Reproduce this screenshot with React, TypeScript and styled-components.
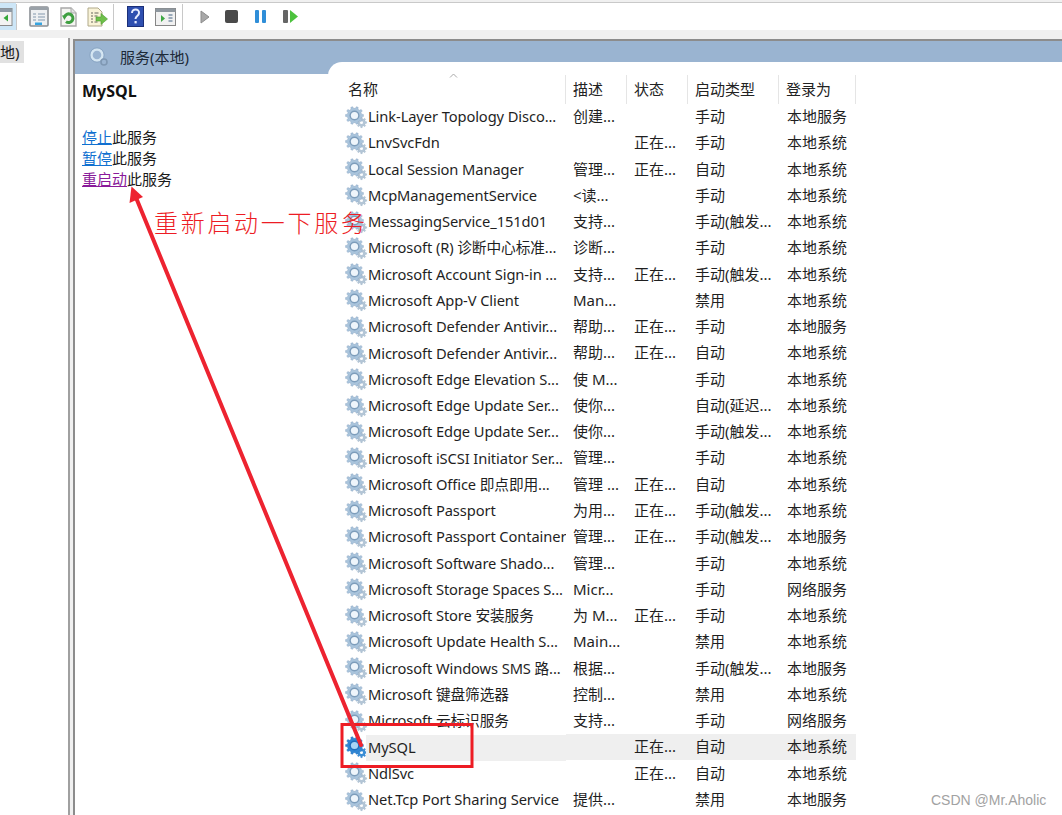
import React from 'react'
import styled, { createGlobalStyle } from 'styled-components'

type Service = {
  name: string;
  desc: string;
  status: string;
  start: string;
  logon: string;
}

const services: Service[] = [
  { name: 'Link-Layer Topology Disco...', desc: '创建...', status: '', start: '手动', logon: '本地服务' },
  { name: 'LnvSvcFdn', desc: '', status: '正在...', start: '手动', logon: '本地系统' },
  { name: 'Local Session Manager', desc: '管理...', status: '正在...', start: '自动', logon: '本地系统' },
  { name: 'McpManagementService', desc: '<读...', status: '', start: '手动', logon: '本地系统' },
  { name: 'MessagingService_151d01', desc: '支持...', status: '', start: '手动(触发...', logon: '本地系统' },
  { name: 'Microsoft (R) 诊断中心标准...', desc: '诊断...', status: '', start: '手动', logon: '本地系统' },
  { name: 'Microsoft Account Sign-in ...', desc: '支持...', status: '正在...', start: '手动(触发...', logon: '本地系统' },
  { name: 'Microsoft App-V Client', desc: 'Man...', status: '', start: '禁用', logon: '本地系统' },
  { name: 'Microsoft Defender Antivir...', desc: '帮助...', status: '正在...', start: '手动', logon: '本地服务' },
  { name: 'Microsoft Defender Antivir...', desc: '帮助...', status: '正在...', start: '自动', logon: '本地系统' },
  { name: 'Microsoft Edge Elevation S...', desc: '使 M...', status: '', start: '手动', logon: '本地系统' },
  { name: 'Microsoft Edge Update Ser...', desc: '使你...', status: '', start: '自动(延迟...', logon: '本地系统' },
  { name: 'Microsoft Edge Update Ser...', desc: '使你...', status: '', start: '手动(触发...', logon: '本地系统' },
  { name: 'Microsoft iSCSI Initiator Ser...', desc: '管理...', status: '', start: '手动', logon: '本地系统' },
  { name: 'Microsoft Office 即点即用...', desc: '管理 ...', status: '正在...', start: '自动', logon: '本地系统' },
  { name: 'Microsoft Passport', desc: '为用...', status: '正在...', start: '手动(触发...', logon: '本地系统' },
  { name: 'Microsoft Passport Container', desc: '管理...', status: '正在...', start: '手动(触发...', logon: '本地服务' },
  { name: 'Microsoft Software Shado...', desc: '管理...', status: '', start: '手动', logon: '本地系统' },
  { name: 'Microsoft Storage Spaces S...', desc: 'Micr...', status: '', start: '手动', logon: '网络服务' },
  { name: 'Microsoft Store 安装服务', desc: '为 M...', status: '正在...', start: '手动', logon: '本地系统' },
  { name: 'Microsoft Update Health S...', desc: 'Main...', status: '', start: '禁用', logon: '本地系统' },
  { name: 'Microsoft Windows SMS 路...', desc: '根据...', status: '', start: '手动(触发...', logon: '本地服务' },
  { name: 'Microsoft 键盘筛选器', desc: '控制...', status: '', start: '禁用', logon: '本地系统' },
  { name: 'Microsoft 云标识服务', desc: '支持...', status: '', start: '手动', logon: '网络服务' },
  { name: 'MySQL', desc: '', status: '正在...', start: '自动', logon: '本地系统' },
  { name: 'NdlSvc', desc: '', status: '正在...', start: '自动', logon: '本地系统' },
  { name: 'Net.Tcp Port Sharing Service', desc: '提供...', status: '', start: '禁用', logon: '本地服务' },
]

const GlobalStyle = createGlobalStyle`
  html, body {
    margin: 0;
    padding: 0;
    background: #fff;
  }
  body {
    font-family: "Noto Sans", "Noto Sans CJK SC", sans-serif;
    font-size: 15px;
    color: #1a1a1a;
  }
`

const Page = styled.div`
  position: relative;
  width: 1062px;
  height: 815px;
  overflow: hidden;
  background: #f0f0f0;
  display: flex;
  flex-direction: column;
`

const Toolbar = styled.div`
  height: 27px;
  margin-top: 2px;
  border-top: 1px solid #c9c9c9;
  background: #fff;
  display: flex;
  align-items: center;
  flex-shrink: 0;
`

const ToolButton = styled.div<{ $w: number; $active?: boolean }>`
  width: ${p => p.$w}px;
  height: 100%;
  display: flex;
  align-items: center;
  justify-content: center;
  background: ${p => (p.$active ? '#cde6f7' : 'transparent')};
  overflow: hidden;
`

const ToolSep = styled.div`
  width: 1px;
  height: 26px;
  background: #c8c8c8;
`

const Workspace = styled.div`
  flex: 1;
  display: flex;
  margin-top: 8px;
  gap: 3px;
  min-height: 0;
`

const TreePane = styled.div`
  width: 68px;
  background: #fff;
  border-right: 2px solid #a0a0a0;
  padding-top: 3px;
  flex-shrink: 0;
`

const TreeItem = styled.div`
  width: 24px;
  height: 22px;
  line-height: 22px;
  background: #e1e1e1;
  font-size: 15px;
  white-space: nowrap;
`

const ServicePanel = styled.div`
  flex: 1;
  border-left: 2px solid #8c8c8c;
  border-top: 2px solid #8c8c8c;
  margin-top: 1px;
  background: #fff;
  display: flex;
  flex-direction: column;
  min-width: 0;
`

const PanelHeader = styled.div`
  height: 33px;
  box-sizing: border-box;
  padding: 0 0 2px 14px;
  background: #9ab4d1;
  display: flex;
  align-items: center;
  gap: 11px;
  font-size: 15px;
  color: #1d2a38;
  flex-shrink: 0;
`

const PanelBody = styled.div`
  flex: 1;
  display: flex;
  min-height: 0;
`

const DetailPane = styled.div`
  width: 253px;
  padding: 5px 0 0 7px;
  box-sizing: border-box;
  flex-shrink: 0;
`

const DetailTitle = styled.div`
  font-weight: 700;
  font-size: 16px;
  line-height: 24px;
  color: #111;
  margin-bottom: 24px;
`

const ActionLine = styled.div`
  font-size: 15px;
  line-height: 21px;
  white-space: nowrap;
`

const ActionLink = styled.a<{ $visited?: boolean }>`
  color: ${p => (p.$visited ? '#8a1a9a' : '#1070d0')};
  text-decoration: underline;
`

const ListPane = styled.div`
  flex: 1;
  margin-top: -12px;
  padding: 13px 0 0 12px;
  background: #fff;
  border-top-left-radius: 14px;
  min-width: 0;
`

const Columns = styled.div`
  display: grid;
  grid-template-columns: 226px 61px 61px 91px 77px;
  width: 516px;
`

const HeaderRow = styled(Columns)`
  height: 29px;
`

const HeaderCell = styled.div`
  position: relative;
  padding-left: 7px;
  font-size: 15px;
  line-height: 28px;
  color: #222;
  border-right: 1px solid #e5e5e5;

  &:first-child {
    padding-left: 8px;
  }
`

const SortCaret = styled.svg`
  position: absolute;
  left: 109px;
  top: -2px;
`

const Rows = styled.div`
  display: grid;
  grid-auto-rows: 26.27px;
`

const Row = styled(Columns)`
  line-height: 25px;
  font-size: 14.7px;
  white-space: nowrap;
  color: #1f1f1f;
`

const NameCell = styled.div`
  display: flex;
  align-items: center;
  margin-left: 5px;
  min-width: 0;
`

const NameText = styled.div<{ $selected?: boolean }>`
  position: relative;
  margin-left: -2px;
  padding-left: 2px;
  flex: 1;
  height: 26px;
  overflow: hidden;
  letter-spacing: -0.1px;
  background: ${p => (p.$selected ? '#efefef' : 'transparent')};
`

const Cell = styled.div<{ $selected?: boolean }>`
  padding-left: 7px;
  height: 26px;
  font-size: 15px;
  background: ${p => (p.$selected ? '#efefef' : 'transparent')};

  &:last-child {
    padding-left: 8px;
  }
`

const Overlay = styled.svg`
  position: absolute;
  left: 0;
  top: 0;
  pointer-events: none;
`

const Callout = styled.span`
  position: absolute;
  left: 154px;
  top: 206px;
  font-size: 24px;
  line-height: 34px;
  letter-spacing: 2.7px;
  font-weight: 300;
  color: #ed1c24;
  white-space: nowrap;
`

const Watermark = styled.span`
  position: absolute;
  left: 931px;
  top: 792px;
  font-family: "Liberation Sans", sans-serif;
  font-size: 14px;
  line-height: 16px;
  color: #a2a2a2;
  white-space: nowrap;
`

const gearPath = (cx: number, cy: number, outer: number, inner: number, teeth: number) => {
  const pts: string[] = []
  const step = (Math.PI * 2) / teeth
  for (let i = 0; i < teeth; i++) {
    const a = i * step
    const list = [
      [a - step * 0.3, inner],
      [a - step * 0.17, outer],
      [a + step * 0.17, outer],
      [a + step * 0.3, inner],
    ]
    list.forEach(([ang, r]) => {
      pts.push(`${(cx + Math.cos(ang) * r).toFixed(2)} ${(cy + Math.sin(ang) * r).toFixed(2)}`)
    })
  }
  return `M${pts.join('L')}Z`
}

const GearIcon = ({ active }: { active?: boolean }) => {
  const main = active ? '#2f85d3' : '#a9c4dc'
  const dark = active ? '#2a73bd' : '#8aa5bf'
  const small = active ? '#3a8ed6' : '#b4c6d6'
  return (
    <svg width="23" height="23" viewBox="0 0 23 23" style={{ flexShrink: 0 }}>
      <path d={gearPath(16.5, 16.5, 5.2, 3.9, 8)} fill={small} stroke={dark} strokeWidth="0.3" />
      <circle cx="16.5" cy="16.5" r="1.5" fill="#fff" />
      <path d={gearPath(9.5, 9.5, 9, 7.2, 10)} fill={main} stroke={dark} strokeWidth="0.4" />
      <circle cx="9.5" cy="9.5" r="5" fill={active ? '#1f6dbb' : '#7d9dbb'} />
      <circle cx="9.5" cy="9.5" r="3.6" fill={active ? '#a8d4f5' : '#eef5fb'} />
    </svg>
  )
}

const WindowGreenIcon = () => (
  <svg width="16" height="18" viewBox="0 0 16 18">
    <rect x="-8" y="0.5" width="20" height="17" fill="#f3f3f3" stroke="#8a8a8a" />
    <rect x="-8" y="0.5" width="20" height="3.5" fill="#8e9aa5" />
    <path d="M8 6.5v7l-4.5-3.5z" fill="#35a83a" />
  </svg>
)

const ListDocIcon = () => (
  <svg width="20" height="21" viewBox="0 0 20 21">
    <rect x="1" y="1" width="18" height="19" rx="1" fill="#eef0f2" stroke="#8a8f94" strokeWidth="1.6" />
    <rect x="1" y="1" width="18" height="3" fill="#9aa1a8" />
    <path d="M4 8h3M9 8h7M4 11h3M9 11h7M4 14h3M9 14h7" stroke="#8398ad" strokeWidth="1" />
    <rect x="6" y="16.500" width="7" height="2.500" fill="#36a4e0" />
  </svg>
)

const RefreshDocIcon = () => (
  <svg width="17" height="20" viewBox="0 0 17 20">
    <path d="M1 1h10l5 5v13H1z" fill="#f5f5f2" stroke="#a8a8a8" strokeWidth="1.400" />
    <path d="M11 1v5h5" fill="#e0e0e0" stroke="#a8a8a8" />
    <path d="M4.500 10a4.300 4.300 0 1 1 1.500 4.600" fill="none" stroke="#3f9f41" strokeWidth="3" />
    <path d="M2 8.500l5-.3L4.500 13z" fill="#3f9f41" />
  </svg>
)

const ExportDocIcon = () => (
  <svg width="21" height="20" viewBox="0 0 21 20">
    <path d="M1 1h10l4 4v14H1z" fill="#f9f3d8" stroke="#b0a989" />
    <path d="M4 6h2M7.500 6h4M4 9h2M7.500 9h3M4 12h2M4 15h2M7.500 15h3" stroke="#66665c" />
    <path d="M9 10h5V6.500l6.500 5.500L14 17.500V14H9z" fill="#6fc04a" stroke="#4b9a31" strokeWidth="0.6" />
  </svg>
)

const HelpIcon = () => (
  <svg width="17" height="21" viewBox="0 0 17 21">
    <rect x="0.5" y="0.5" width="16" height="20" fill="#2e4fb0" stroke="#1b2f78" />
    <path d="M5 7c0-5 7.500-4.500 7 0 0 3-3.500 3-3.500 6" fill="none" stroke="#e6ecff" strokeWidth="2" />
    <rect x="7.500" y="15" width="2.200" height="2.400" fill="#e6ecff" />
  </svg>
)

const WindowPlayIcon = () => (
  <svg width="21" height="18" viewBox="0 0 21 18">
    <rect x="0.5" y="0.5" width="20" height="17" fill="#f1f1f1" stroke="#868686" />
    <rect x="0.5" y="0.5" width="20" height="3.500" fill="#8e979f" />
    <path d="M6 7v7l4-3.500z" fill="#3ea743" />
    <path d="M13.500 7h4M13.500 10h4M13.500 13h4" stroke="#7d93a8" strokeWidth="1.400" />
  </svg>
)

const PlayIcon = () => (
  <svg width="10" height="14" viewBox="0 0 10 14">
    <path d="M1 1l8 6-8 6z" fill="#a8a8a8" stroke="#8c8c8c" />
  </svg>
)

const StopIcon = () => (
  <svg width="13" height="13" viewBox="0 0 13 13">
    <rect x="0" y="0" width="13" height="13" rx="2" fill="#4a4a4a" />
  </svg>
)

const PauseIcon = () => (
  <svg width="11" height="13" viewBox="0 0 11 13">
    <rect x="0" y="0" width="4" height="13" rx="1" fill="#2f8ed8" />
    <rect x="7" y="0" width="4" height="13" rx="1" fill="#2f8ed8" />
  </svg>
)

const ResumeIcon = () => (
  <svg width="15" height="13" viewBox="0 0 15 13">
    <rect x="0" y="0" width="5" height="13" rx="1" fill="#666" />
    <path d="M7 0l8 6.500-8 6.500z" fill="#4cc23d" />
  </svg>
)

const PanelGearIcon = () => (
  <svg width="20" height="20" viewBox="0 0 20 20">
    <circle cx="8" cy="8" r="5.500" fill="none" stroke="#d5e6f2" strokeWidth="2.400" />
    <circle cx="8" cy="8" r="7.200" fill="none" stroke="#7f9cbb" strokeWidth="0.600" />
    <circle cx="15" cy="15" r="3" fill="none" stroke="#7f98b3" strokeWidth="1.600" />
  </svg>
)

const App = () => (
  <>
    <GlobalStyle />
    <Page>
      <Toolbar>
        <ToolButton $w={16} $active><WindowGreenIcon /></ToolButton>
        <ToolSep />
        <ToolButton $w={12} />
        <ToolButton $w={20}><ListDocIcon /></ToolButton>
        <ToolButton $w={10} />
        <ToolButton $w={19}><RefreshDocIcon /></ToolButton>
        <ToolButton $w={9} />
        <ToolButton $w={21}><ExportDocIcon /></ToolButton>
        <ToolButton $w={5} />
        <ToolSep />
        <ToolButton $w={13} />
        <ToolButton $w={17}><HelpIcon /></ToolButton>
        <ToolButton $w={10} />
        <ToolButton $w={22}><WindowPlayIcon /></ToolButton>
        <ToolButton $w={6} />
        <ToolSep />
        <ToolButton $w={17} />
        <ToolButton $w={10}><PlayIcon /></ToolButton>
        <ToolButton $w={14} />
        <ToolButton $w={14}><StopIcon /></ToolButton>
        <ToolButton $w={16} />
        <ToolButton $w={12}><PauseIcon /></ToolButton>
        <ToolButton $w={16} />
        <ToolButton $w={16}><ResumeIcon /></ToolButton>
      </Toolbar>
      <Workspace>
        <TreePane>
          <TreeItem>地)</TreeItem>
        </TreePane>
        <ServicePanel>
          <PanelHeader>
            <PanelGearIcon />
            <span>服务(本地)</span>
          </PanelHeader>
          <PanelBody>
            <DetailPane>
              <DetailTitle>MySQL</DetailTitle>
              <ActionLine><ActionLink>停止</ActionLink>此服务</ActionLine>
              <ActionLine><ActionLink>暂停</ActionLink>此服务</ActionLine>
              <ActionLine><ActionLink $visited>重启动</ActionLink>此服务</ActionLine>
            </DetailPane>
            <ListPane>
              <HeaderRow>
                <HeaderCell>
                  名称
                  <SortCaret width="9" height="5" viewBox="0 0 9 5">
                    <path d="M1 4.500l3.500-3.500 3.500 3.500" fill="none" stroke="#a8a8a8" />
                  </SortCaret>
                </HeaderCell>
                <HeaderCell>描述</HeaderCell>
                <HeaderCell>状态</HeaderCell>
                <HeaderCell>启动类型</HeaderCell>
                <HeaderCell>登录为</HeaderCell>
              </HeaderRow>
              <Rows>
                {services.map((item, i) => {
                  const selected = item.name === 'MySQL'
                  return (
                    <Row key={i}>
                      <NameCell>
                        <GearIcon active={selected} />
                        <NameText $selected={selected}>{item.name}</NameText>
                      </NameCell>
                      <Cell $selected={selected}>{item.desc}</Cell>
                      <Cell $selected={selected}>{item.status}</Cell>
                      <Cell $selected={selected}>{item.start}</Cell>
                      <Cell $selected={selected}>{item.logon}</Cell>
                    </Row>
                  )
                })}
              </Rows>
            </ListPane>
          </PanelBody>
        </ServicePanel>
      </Workspace>

      <Overlay width="1062" height="815" viewBox="0 0 1062 815">
        <rect x="342" y="724.500" width="130" height="42" fill="none" stroke="#ed1c24" strokeWidth="3" />
        <path d="M137 200L361 745" stroke="#ed2330" strokeWidth="4" strokeLinecap="round" />
        <path d="M131.500 186.500L143 197L129.500 203z" fill="#ed2330" />
      </Overlay>
      <Callout>重新启动一下服务</Callout>
      <Watermark>CSDN @Mr.Aholic</Watermark>
    </Page>
  </>
)

export default App
